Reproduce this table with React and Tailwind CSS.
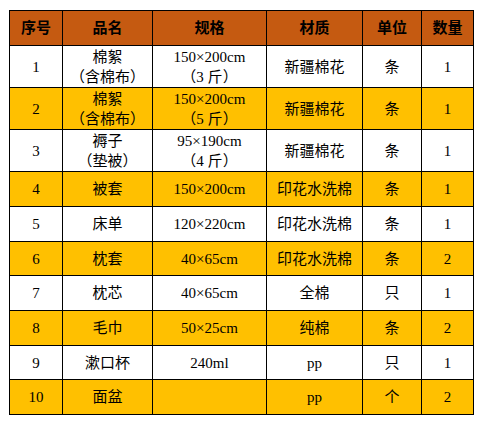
const headers = ['序号', '品名', '规格', '材质', '单位', '数量'];

const rows = [
  { no: '1', name: ['棉絮', '（含棉布）'], spec: ['150×200cm', '（3 斤）'], mat: '新疆棉花', unit: '条', qty: '1' },
  { no: '2', name: ['棉絮', '（含棉布）'], spec: ['150×200cm', '（5 斤）'], mat: '新疆棉花', unit: '条', qty: '1' },
  { no: '3', name: ['褥子', '（垫被）'], spec: ['95×190cm', '（4 斤）'], mat: '新疆棉花', unit: '条', qty: '1' },
  { no: '4', name: ['被套'], spec: ['150×200cm'], mat: '印花水洗棉', unit: '条', qty: '1' },
  { no: '5', name: ['床单'], spec: ['120×220cm'], mat: '印花水洗棉', unit: '条', qty: '1' },
  { no: '6', name: ['枕套'], spec: ['40×65cm'], mat: '印花水洗棉', unit: '条', qty: '2' },
  { no: '7', name: ['枕芯'], spec: ['40×65cm'], mat: '全棉', unit: '只', qty: '1' },
  { no: '8', name: ['毛巾'], spec: ['50×25cm'], mat: '纯棉', unit: '条', qty: '2' },
  { no: '9', name: ['漱口杯'], spec: ['240ml'], mat: 'pp', unit: '只', qty: '1' },
  { no: '10', name: ['面盆'], spec: [''], mat: 'pp', unit: '个', qty: '2' },
];

const font = "font-['Liberation_Serif','Noto_Sans_CJK_SC',serif]";

// 全角括号：每个括号占一个字宽，居中
function Line({ text }) {
  if (text.startsWith('（') && text.endsWith('）')) {
    return (
      <span className="whitespace-pre">
        <span className="inline-block w-[15px] text-center">（</span>
        {text.slice(1, -1)}
        <span className="inline-block w-[15px] text-center">）</span>
      </span>
    );
  }
  return <span className="whitespace-pre">{text}</span>;
}

function Cell({ lines, bg }) {
  return (
    <div className={`${bg} flex flex-col items-center justify-center text-[15px] leading-[20px] text-black`}>
      {lines.map((l, i) => (
        <Line key={i} text={l} />
      ))}
    </div>
  );
}

export default function App() {
  return (
    <div className={`w-[483px] h-[428px] bg-white pl-[9px] pt-[10px] ${font}`}>
      <div className="grid w-[465px] grid-cols-[52px_89px_113px_95px_58px_51px] grid-rows-[34px_41px_41px_41px_34px_34px_33px_34px_34px_33px_34px] gap-px bg-black p-px">
        {headers.map((h) => (
          <div key={h} className="bg-[#c55a11] flex items-center justify-center text-[15px] font-bold text-black">
            {h}
          </div>
        ))}
        {rows.map((r, i) => {
          const bg = i % 2 === 1 ? 'bg-[#ffc000]' : 'bg-white';
          return [
            <Cell key={r.no + 'a'} lines={[r.no]} bg={bg} />,
            <Cell key={r.no + 'b'} lines={r.name} bg={bg} />,
            <Cell key={r.no + 'c'} lines={r.spec} bg={bg} />,
            <Cell key={r.no + 'd'} lines={[r.mat]} bg={bg} />,
            <Cell key={r.no + 'e'} lines={[r.unit]} bg={bg} />,
            <Cell key={r.no + 'f'} lines={[r.qty]} bg={bg} />,
          ];
        })}
      </div>
    </div>
  );
}
